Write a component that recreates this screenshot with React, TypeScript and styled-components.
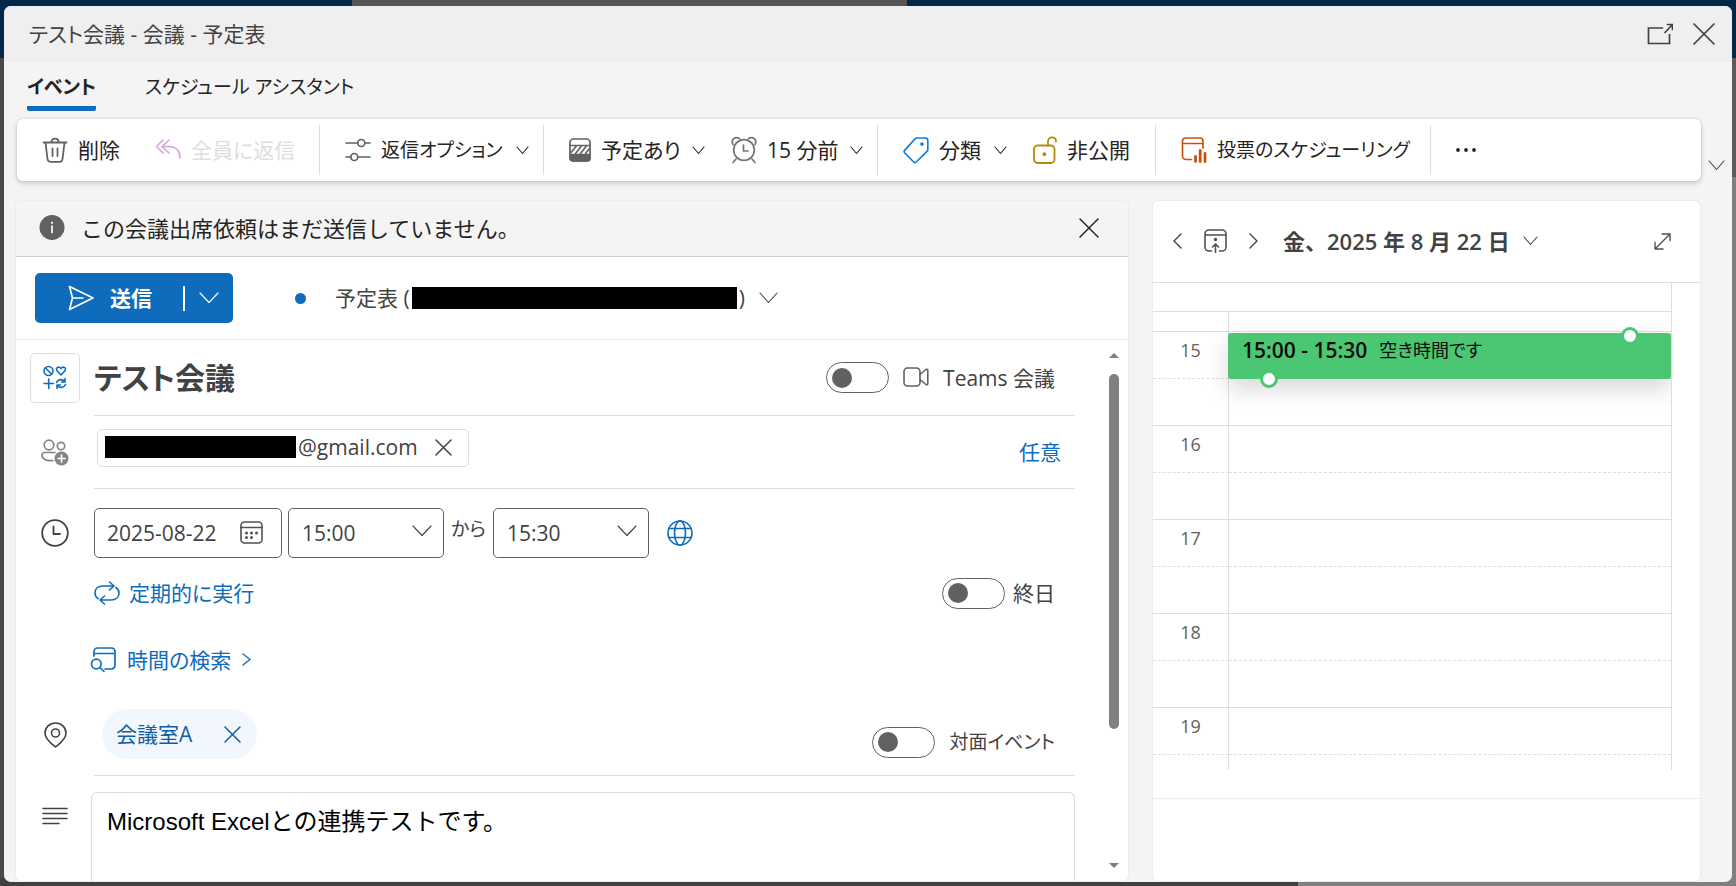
import React, { useState } from "react";
import styled, { createGlobalStyle, css } from "styled-components";

const GlobalStyle = createGlobalStyle`
  *, *::before, *::after { box-sizing: border-box; }
  body { margin: 0; }
  body, button, input, select, textarea {
    font-family: "Open Sans", "Noto Sans CJK JP", sans-serif;
    font-size: 21px;
    line-height: 28px;
    color: #424242;
    font-feature-settings: "palt";
  }
  button { border: 0; padding: 0; background: none; cursor: pointer; }
  svg { display: block; flex: none; }
  h1, p { margin: 0; font: inherit; }
`;

/* ---------- shell ---------- */

const Backdrop = styled.div`
  height: 100vh;
  min-height: 600px;
  padding: 6px 4px 4px;
  background:
    linear-gradient(#555, #555) 352px 0 / 555px 6px no-repeat,
    linear-gradient(#03264a, #03264a) 0 0 / 100% 58px no-repeat,
    linear-gradient(#404140, #404140) 0 100% / 1298px 8px no-repeat,
    linear-gradient(#4b4947, #4b4947) 0 0 / 12px 100% no-repeat,
    linear-gradient(#5a5c5c 177px, #7e8080 177px);
`;

const Dialog = styled.div`
  display: flex;
  flex-direction: column;
  height: 100%;
  overflow: hidden;
  border-radius: 7px;
  background: #f4f4f4;
`;

const TitleBar = styled.header`
  display: flex;
  align-items: center;
  flex: none;
  height: 56px;
  padding: 0 17px 0 25px;
  background: #efefef;
`;

const WindowTitle = styled.h1`
  flex: 1;
`;

const WindowButtons = styled.div`
  display: flex;
  align-items: center;
  gap: 20px;
`;

const IconButton = styled.button`
  display: flex;
  align-items: center;
  justify-content: center;
  color: inherit;
`;

/* ---------- tabs and ribbon ---------- */

const TabList = styled.div`
  display: flex;
  flex: none;
  gap: 49px;
  height: 57px;
  padding: 11px 23px 0;
`;

const Tab = styled.button<{ $active?: boolean }>`
  display: flex;
  flex-direction: column;
  align-self: flex-start;
  height: 38px;
  color: #242424;
  font-size: 19px;
  font-weight: ${(p) => (p.$active ? 700 : 400)};
  border-bottom: 5px solid ${(p) => (p.$active ? "#0f6cbd" : "transparent")};
  border-radius: 2px;
`;

const RibbonRow = styled.div`
  display: flex;
  flex: none;
  align-items: flex-end;
  padding: 0 1px 20px 13px;
`;

const Ribbon = styled.div`
  display: flex;
  align-items: center;
  flex: 1;
  height: 62px;
  border-radius: 6px;
  background: #fff;
  box-shadow: 0 2px 5px rgba(0, 0, 0, 0.2), 0 0 2px rgba(0, 0, 0, 0.14);
`;

const RibbonGroup = styled.div<{ $width: number }>`
  display: flex;
  align-items: center;
  flex: none;
  gap: 26px;
  width: ${(p) => p.$width}px;
  height: 50px;
  padding-left: 25px;
  border-right: 1px solid #dcdcdc;

  &:last-child { border-right: 0; }
`;

const RibbonButton = styled.button<{ $width: number; $split?: boolean; $compact?: boolean }>`
  display: flex;
  align-items: center;
  flex: none;
  gap: 10px;
  width: ${(p) => p.$width}px;
  color: #242424;
  font-size: ${(p) => (p.$compact ? 19 : 21)}px;
  white-space: nowrap;

  &:disabled { color: #dedede; }

  & > svg:last-child { ${(p) => p.$split && css`margin-left: auto;`} }
`;

const RibbonToggle = styled(IconButton)`
  width: 30px;
  height: 32px;
`;

/* ---------- panes ---------- */

const Panes = styled.div`
  display: grid;
  grid-template-columns: minmax(0, 1fr) 547px;
  gap: 25px;
  flex: 1;
  min-height: 0;
  padding: 0 32px 1px 12px;
`;

const Pane = styled.section`
  display: flex;
  flex-direction: column;
  min-height: 0;
  overflow: hidden;
  border-radius: 5px;
  background: #fff;
  box-shadow: 0 0 2px rgba(0, 0, 0, 0.12);
`;

const MessageBar = styled.div`
  display: flex;
  align-items: center;
  flex: none;
  gap: 16px;
  height: 56px;
  padding: 0 29px 2px 22px;
  border-bottom: 1px solid #cfcfcf;
  background: #f4f4f4;
  color: #242424;
  font-size: 22px;
  font-feature-settings: normal;

  p { flex: 1; }
`;

const SendRow = styled.div`
  display: flex;
  align-items: center;
  flex: none;
  height: 83px;
  padding: 0 19px;
  border-bottom: 1px solid #ececec;
`;

const SendSplit = styled.div`
  display: flex;
  align-items: center;
  width: 198px;
  height: 50px;
  border-radius: 5px;
  background: #0f6cbd;
  color: #fff;
`;

const SendButton = styled.button`
  display: flex;
  align-items: center;
  gap: 16px;
  width: 150px;
  height: 25px;
  padding-left: 33px;
  border-right: 2px solid #fff;
  color: #fff;
  font-weight: 700;
`;

const SendMenu = styled(IconButton)`
  flex: 1;
  height: 50px;
`;

const CalendarDot = styled.span`
  width: 11px;
  height: 11px;
  margin-left: 62px;
  border-radius: 50%;
  background: #0f6cbd;
`;

const CalendarPicker = styled.button`
  display: flex;
  align-items: center;
  gap: 2px;
  margin-left: 29px;
  color: #424242;

  & > svg { margin-left: 12px; }
`;

const Redacted = styled.span<{ $width: number }>`
  width: ${(p) => p.$width}px;
  height: 22px;
  background: #000;
`;

/* ---------- form ---------- */

const FormArea = styled.div`
  display: flex;
  flex: 1;
  min-height: 0;
`;

const Form = styled.form`
  display: flex;
  flex-direction: column;
  flex: 1;
  min-width: 0;
  padding-right: 25px;
`;

const Field = styled.div<{ $height: number }>`
  display: grid;
  grid-template-columns: 78px minmax(0, 1fr);
  flex: none;
  height: ${(p) => p.$height}px;
`;

const FieldIcon = styled.div<{ $raised?: boolean }>`
  display: flex;
  align-items: center;
  justify-content: center;
  padding-bottom: ${(p) => (p.$raised ? 16 : 0)}px;
`;

const FieldBody = styled.div<{ $line?: boolean; $end?: number }>`
  display: flex;
  align-items: center;
  justify-content: space-between;
  border-bottom: ${(p) => (p.$line ? "1px solid #dcdcdc" : "0")};
  padding-right: ${(p) => p.$end ?? 20}px;
`;

const CharmButton = styled(IconButton)`
  width: 50px;
  height: 50px;
  border: 1px solid #dedede;
  border-radius: 5px;
`;

const SubjectInput = styled.input`
  flex: 1;
  min-width: 0;
  height: 44px;
  padding: 0 0 3px;
  border: 0;
  outline: 0;
  background: none;
  font-size: 30px;
  font-weight: 700;
`;

const SwitchLabel = styled.label<{ $gap: number; $compact?: boolean }>`
  display: flex;
  align-items: center;
  gap: ${(p) => p.$gap}px;
  font-size: ${(p) => (p.$compact ? 19 : 21)}px;
  white-space: nowrap;
`;

const Switch = styled.input`
  display: flex;
  align-items: center;
  appearance: none;
  width: 63px;
  height: 31px;
  margin: 0;
  padding: 0 5px;
  border: 1px solid #616161;
  border-radius: 16px;
  background: #fff;

  &::before {
    content: "";
    width: 20px;
    height: 20px;
    border-radius: 50%;
    background: #616161;
  }
  &:checked { justify-content: flex-end; }
`;

const AttendeeChip = styled.div`
  display: flex;
  align-items: center;
  gap: 2px;
  width: 372px;
  height: 38px;
  margin: 0 0 8px 3px;
  padding: 0 16px 2px 7px;
  border: 1px solid #dedede;
  border-radius: 5px;

  & > button { margin-left: auto; }
`;

const LinkButton = styled.button<{ $gap?: number }>`
  display: flex;
  align-items: center;
  gap: ${(p) => p.$gap ?? 0}px;
  color: #0f6cbd;
`;

const FindTimeButton = styled(LinkButton)`
  margin-left: -4px;
`;

const TimeBody = styled.div`
  display: flex;
  align-items: center;
`;

const DateBox = styled.label`
  display: flex;
  align-items: center;
  width: 188px;
  height: 50px;
  margin-right: 6px;
  padding: 0 18px 0 12px;
  border: 1px solid #616161;
  border-radius: 5px;

  input {
    flex: 1;
    min-width: 0;
    padding: 0;
    border: 0;
    outline: 0;
  }
`;

const SelectBox = styled.div`
  display: grid;
  align-items: center;
  width: 156px;
  height: 50px;

  & > * { grid-area: 1 / 1; }
  & > svg { justify-self: end; margin: 0 12px 4px 0; pointer-events: none; }

  select {
    appearance: none;
    width: 100%;
    height: 50px;
    padding: 0 13px;
    border: 1px solid #616161;
    border-radius: 5px;
    background: #fff;
  }
`;

const RangeWord = styled.span`
  width: 49px;
  padding-bottom: 8px;
  font-size: 19px;
  text-align: center;
`;

const GlobeButton = styled(IconButton)`
  margin-left: 18px;
  color: #0f6cbd;
`;

const PlaceChip = styled.div`
  display: flex;
  align-items: center;
  align-self: flex-start;
  justify-content: space-between;
  width: 155px;
  height: 50px;
  margin-left: 8px;
  padding: 0 16px 0 14px;
  border-radius: 25px;
  background: #f1f7fc;
  color: #115ea3;
`;

const DescriptionField = styled.div`
  display: grid;
  grid-template-columns: 75px minmax(0, 1fr);
  flex: 1;
  min-height: 90px;
  padding-top: 16px;
`;

const DescriptionIcon = styled.div`
  padding: 15px 0 0 26px;
`;

const Description = styled.textarea`
  width: 100%;
  height: 100%;
  padding: 11px 15px;
  border: 1px solid #dcdcdc;
  border-bottom: 0;
  border-radius: 6px 6px 0 0;
  outline: 0;
  resize: none;
  overflow: hidden;
  background: none;
  color: #000;
  font-family: "Liberation Sans", "Noto Sans CJK JP", sans-serif;
  font-size: 24px;
  line-height: 36px;
  font-feature-settings: normal;
`;

const Scrollbar = styled.div`
  display: flex;
  flex-direction: column;
  align-items: center;
  justify-content: space-between;
  width: 28px;
  padding: 13px 0;
`;

const ScrollTrack = styled.div`
  flex: 1;
  width: 10px;
  padding: 16px 0;
`;

const ScrollThumb = styled.div`
  height: 75%;
  border-radius: 5px;
  background: #808080;
`;

/* ---------- day calendar ---------- */

const DayHeader = styled.div`
  display: flex;
  align-items: center;
  flex: none;
  height: 82px;
  padding: 0 29px 1px 20px;
  border-bottom: 1px solid #dedede;
`;

const DayNav = styled.div`
  display: flex;
  align-items: center;
  gap: 22px;
  width: 110px;
`;

const DayPicker = styled.button`
  display: flex;
  align-items: center;
  gap: 13px;
  margin-right: auto;
  font-size: 22px;
  font-weight: 600;
  font-feature-settings: normal;
  white-space: nowrap;
`;

const DayGrid = styled.div`
  flex: none;
  margin-right: 28px;
  border-right: 1px solid #dedede;
`;

const AllDayRow = styled.div`
  height: 29px;
  border-bottom: 1px solid #dedede;
`;

const Hours = styled.div`
  height: 458px;
  overflow: hidden;
`;

const HourRow = styled.div<{ $height: number }>`
  display: grid;
  grid-template-columns: 76px minmax(0, 1fr);
  grid-template-rows: 47px 47px;
  align-content: end;
  height: ${(p) => p.$height}px;
`;

const HourLabel = styled.div`
  display: flex;
  align-items: center;
  justify-content: center;
  padding-bottom: 10px;
  border-right: 1px solid #dedede;
  border-bottom: 1px dashed #e0e0e0;
  color: #616161;
  font-size: 18px;
`;

const HourGutter = styled.div`
  border-right: 1px solid #dedede;
  border-bottom: 1px solid #dedede;
`;

const HalfSlot = styled.div<{ $dashed?: boolean }>`
  position: relative;
  border-bottom: 1px ${(p) => (p.$dashed ? "dashed" : "solid")} #dedede;
`;

const EventBlock = styled.div`
  position: absolute;
  inset: 1px 0 -1px -1px;
  z-index: 1;
  display: flex;
  align-items: flex-start;
  gap: 12px;
  padding: 3px 14px;
  border-radius: 3px;
  background: #4bc672;
  color: #0b0b0b;
  font-size: 18px;
  white-space: nowrap;
  box-shadow: 0 10px 24px rgba(0, 0, 0, 0.16);

  strong { font-size: 21px; font-weight: 600; }
`;

const Handle = styled.span<{ $end?: boolean }>`
  position: absolute;
  ${(p) => (p.$end ? "bottom: -9px; left: 32px;" : "top: -6px; right: 32px;")}
  width: 18px;
  height: 18px;
  border: 3px solid #4bc672;
  border-radius: 50%;
  background: #fff;
`;

const DayFooter = styled.div`
  flex: 1;
  margin-top: 28px;
  border-top: 1px solid #ececec;
`;

/* ---------- icons ---------- */

interface IconProps {
  w?: number;
  h?: number;
  box?: string;
  color?: string;
  stroke?: number;
  children: React.ReactNode;
}

const Icon = ({ w = 26, h = w, box, color = "currentColor", stroke = 1.6, children }: IconProps) => (
  <svg
    width={w}
    height={h}
    viewBox={box ?? `0 0 ${w} ${h}`}
    fill="none"
    stroke={color}
    strokeWidth={stroke}
    strokeLinecap="round"
    strokeLinejoin="round"
    aria-hidden="true"
  >
    {children}
  </svg>
);

const Chevron = ({ w = 13, color }: { w?: number; color?: string }) => {
  const h = Math.round(w / 2) + 2;
  return (
    <Icon w={w} h={h} color={color} stroke={1.1}>
      <path d={`M1 1 L${w / 2} ${h - 1.5} L${w - 1} 1`} />
    </Icon>
  );
};

const Cross = ({ size, color, stroke = 1.5 }: { size: number; color?: string; stroke?: number }) => (
  <Icon w={size} color={color} stroke={stroke}>
    <path d={`M1 1 L${size - 1} ${size - 1} M${size - 1} 1 L1 ${size - 1}`} />
  </Icon>
);

const PopOutIcon = () => (
  <Icon w={26} h={22} stroke={1.7}>
    <path d="M15.500 5H1.500v15.500h21V11.500M18 9.500 25 2M20.500 1.500h5v5" strokeLinejoin="miter" />
  </Icon>
);

const TrashIcon = () => (
  <Icon color="#616161" stroke={1.8}>
    <path d="M1.500 5.500h23M9.500 5c0-4.600 7-4.600 7 0M3.500 5.500l2 16.500c.2 1.800 1.200 2.800 3 2.800h9c1.800 0 2.800-1 3-2.800l2-16.500M10.500 11.500v7.500M15.500 11.500v7.500" />
  </Icon>
);

const ReplyAllIcon = () => (
  <Icon w={26} h={24} color="#d9a5de" stroke={1.7}>
    <path d="M8 2 1.500 8.500 8 15M14 2 7 8.500l7 6.500M7.500 8.500H14c6.500 0 11 4 11 11.500" />
  </Icon>
);

const SlidersIcon = () => (
  <Icon w={26} h={24} color="#616161" stroke={1.7}>
    <path d="M1 5h11.500M20 5h5M1 19h5M13 19h12" />
    <circle cx="16.300" cy="5" r="3.500" />
    <circle cx="9.300" cy="19" r="3.500" />
  </Icon>
);

const BusyIcon = () => (
  <Icon w={22} h={24} color="#616161" stroke={1.7}>
    <rect x="1" y="1" width="20" height="22" rx="3.500" />
    <path d="M1 16.500h20v3.500a3 3 0 0 1-3 3H4a3 3 0 0 1-3-3z" fill="#616161" />
    <path d="M1 7.500h20M2 14.500 7 8.500M6.500 15.500 12 8.500M11.500 15.500 17 8.500M16.500 15.500 20.500 10.500" />
  </Icon>
);

const AlarmIcon = () => (
  <Icon w={26} h={28} color="#757575" stroke={1.7}>
    <circle cx="13" cy="14" r="10.300" />
    <path d="M2 8.500C-.5 4 3.500 0 8.500 2.500M24 8.500C26.500 4 22.500 0 17.500 2.500M12.500 9v6h4.500M5 23 2 26.500M21 23l3 3.500" />
  </Icon>
);

const TagIcon = () => (
  <Icon w={26} h={28} color="#0f7fd8" stroke={1.7}>
    <path d="M14 2h8.500c1.500 0 2.300.9 2.300 2.500v9c0 .8-.3 1.300-.8 1.900L13.200 26c-.8.900-1.700.9-2.500 0L1.800 17c-.9-.9-.9-2 0-2.900L12.300 2.700c.5-.5 1-.7 1.700-.7z" />
    <circle cx="19" cy="8" r="1" fill="#0f7fd8" />
  </Icon>
);

const UnlockIcon = () => (
  <Icon w={24} h={28} color="#b38a10" stroke={1.8}>
    <rect x="1" y="9.500" width="20.500" height="17.500" rx="3.500" />
    <path d="M15 9.500V5.500c0-5.500 8-5.500 8 0" />
    <circle cx="11.300" cy="18.200" r="1" fill="#b38a10" />
  </Icon>
);

const PollIcon = () => (
  <Icon w={26} h={26} color="#ca5010" stroke={1.7}>
    <path d="M10.500 22.500H5A3.500 3.500 0 0 1 1.500 19V4A3 3 0 0 1 4.500 1h14.500a3 3 0 0 1 3 3v7M1.500 6.500h20.500" />
    <path d="M14.500 19.500v5M19.200 13.500v11M24 16.500v8" strokeWidth="2.800" />
  </Icon>
);

const MoreIcon = () => (
  <Icon w={20} h={4} color="none">
    <g fill="#242424">
      <circle cx="2" cy="2" r="1.900" />
      <circle cx="10" cy="2" r="1.900" />
      <circle cx="18" cy="2" r="1.900" />
    </g>
  </Icon>
);

const InfoIcon = () => (
  <Icon w={27} color="none">
    <circle cx="14" cy="13.500" r="12.500" fill="#616161" />
    <path d="M14 12v6.500" stroke="#fff" strokeWidth="1.700" />
    <circle cx="14" cy="8.800" r="1.100" fill="#fff" />
  </Icon>
);

const SendIcon = () => (
  <Icon w={26} h={26} stroke={1.7}>
    <path d="M1.500 1.500 25 13 1.500 24.500 4.500 13zM4.500 13H15" />
  </Icon>
);

const CharmIcon = () => (
  <Icon w={24} h={26} color="#0f6cbd" stroke={1.6}>
    <circle cx="5.500" cy="6" r="4.500" />
    <path d="M2.500 3 8.500 9M18 10l-3.800-4C12 3.200 15.500.5 18 3.500c2.500-3 6-.3 3.800 2.500zM1 18.500h9.500M5.700 14v9.500M13.500 17.500c1.500-3.500 6-3.800 8-1M22 13.500v3.500h-3.500M22.500 19.500c-1.500 3.500-6 3.800-8 1M14 23.500V20h3.500" />
  </Icon>
);

const VideoIcon = () => (
  <Icon w={26} h={22} color="#616161" stroke={1.6}>
    <rect x="1" y="1" width="16" height="18" rx="3.500" />
    <path d="m17 7.500 6-5c.8-.6 1.800-.3 1.800.7v13.600c0 1-1 1.300-1.800.7l-6-5" />
  </Icon>
);

const PeopleAddIcon = () => (
  <Icon w={28} h={27} color="#858585" stroke={1.7}>
    <circle cx="8" cy="6" r="4.800" />
    <circle cx="20" cy="7" r="3.700" />
    <path d="M14 13.500H3.500A2.500 2.500 0 0 0 1 16c0 4 4 6.300 11 5.500" />
    <circle cx="20.500" cy="19.500" r="7" fill="#858585" stroke="none" />
    <path d="M20.500 16v7M17 19.500h7" stroke="#fff" />
  </Icon>
);

const ClockIcon = () => (
  <Icon w={28} stroke={1.8}>
    <circle cx="14" cy="14" r="12.800" />
    <path d="M12.500 7.500v7.500h6.500" />
  </Icon>
);

const CalendarIcon = () => (
  <Icon w={23} h={23} color="#505050" stroke={1.6}>
    <rect x="1" y="1" width="21" height="21" rx="3.500" />
    <path d="M1 6.500h21" />
    <g fill="#505050" stroke="none">
      <circle cx="6.500" cy="12" r="1.500" />
      <circle cx="11.500" cy="12" r="1.500" />
      <circle cx="16.500" cy="12" r="1.500" />
      <circle cx="6.500" cy="16.500" r="1.500" />
      <circle cx="11.500" cy="16.500" r="1.500" />
    </g>
  </Icon>
);

const GlobeIcon = () => (
  <Icon w={26} stroke={1.6}>
    <circle cx="13" cy="13" r="12" />
    <ellipse cx="13" cy="13" rx="5.500" ry="12" />
    <path d="M2 8.500h22M2 17.500h22" />
  </Icon>
);

const RepeatIcon = () => (
  <Icon w={26} h={24} stroke={1.6}>
    <path d="M15.500 1l4.500 4-4.500 4M20 5H9C3.500 5 1 8.500 1 12c0 2.500 1 4.300 3 5.700M22 6.500c2 1.300 3 3.200 3 5.500 0 3.500-2.500 7-8 7H6M10.500 15 6 19l4.500 4" />
  </Icon>
);

const FindTimeIcon = () => (
  <Icon w={26} h={26} stroke={1.7}>
    <path d="M4 9V4.500A3.500 3.500 0 0 1 7.500 1h14A3.500 3.500 0 0 1 25 4.500v14a3.500 3.500 0 0 1-3.500 3.500H15M4 6.500h21" />
    <circle cx="6.300" cy="17" r="4.800" />
    <path d="m10 20.500 4 4" />
  </Icon>
);

const SmallArrow = ({ flip, color, h = 16 }: { flip?: boolean; color?: string; h?: number }) => (
  <Icon w={9} h={h} color={color} stroke={1.4}>
    <path d={flip ? `M8 1 1 ${h / 2} 8 ${h - 1}` : `M1 1 8 ${h / 2} 1 ${h - 1}`} />
  </Icon>
);

const PinIcon = () => (
  <Icon w={23} h={26} stroke={1.6}>
    <path d="M11.500 25C8 22 1 17.500 1 11a10.500 10 0 0 1 21 0c0 6.500-7 11-10.500 14z" />
    <circle cx="11.500" cy="11" r="4" />
  </Icon>
);

const TextIcon = () => (
  <Icon w={26} h={18} stroke={1.5}>
    <path d="M1 1.500h24M1 6.500h24M1 11.500h24M1 16.500h16" />
  </Icon>
);

const TodayIcon = () => (
  <Icon w={23} h={24} color="#505050" stroke={1.6}>
    <path d="M7.500 22H5a4 4 0 0 1-4-4V5a4 4 0 0 1 4-4h13a4 4 0 0 1 4 4v13a4 4 0 0 1-4 4h-2.500M1 6h21M11.500 23.500v-8M8.500 18l3-3 3 3" />
    <circle cx="11.500" cy="10.500" r=".9" fill="#505050" />
  </Icon>
);

const ExpandIcon = () => (
  <Icon w={17} h={17} color="#505050" stroke={1.4}>
    <path d="M1 9.500V16h8M1 16 16 1M8 1h8v6.500" />
  </Icon>
);

const ScrollArrow = ({ down }: { down?: boolean }) => (
  <Icon w={10} h={5} color="none">
    <path d={down ? "M0 0h10L5 5z" : "M0 5h10L5 0z"} fill="#7f7f7f" />
  </Icon>
);

/* ---------- screen ---------- */

const hours = [16, 17, 18, 19];
const times = ["15:00", "15:30", "16:00", "16:30"];

const TimeSelect = ({ label, initial }: { label: string; initial: string }) => (
  <SelectBox>
    <select aria-label={label} defaultValue={initial}>
      {times.map((t) => (
        <option key={t}>{t}</option>
      ))}
    </select>
    <Chevron w={20} />
  </SelectBox>
);

export default function App() {
  const [subject, setSubject] = useState("テスト会議");

  return (
    <>
      <GlobalStyle />
      <Backdrop>
        <Dialog role="dialog" aria-label="会議の編集">
          <TitleBar>
            <WindowTitle>テスト会議 - 会議 - 予定表</WindowTitle>
            <WindowButtons>
              <IconButton aria-label="新しいウィンドウで開く"><PopOutIcon /></IconButton>
              <IconButton aria-label="閉じる"><Cross size={22} stroke={1.7} /></IconButton>
            </WindowButtons>
          </TitleBar>

          <TabList role="tablist">
            <Tab role="tab" aria-selected="true" $active>イベント</Tab>
            <Tab role="tab" aria-selected="false">スケジュール アシスタント</Tab>
          </TabList>

          <RibbonRow>
            <Ribbon role="toolbar" aria-label="イベントの操作">
              <RibbonGroup $width={303}>
                <RibbonButton $width={87}><TrashIcon />削除</RibbonButton>
                <RibbonButton $width={144} disabled><ReplyAllIcon />全員に返信</RibbonButton>
              </RibbonGroup>
              <RibbonGroup $width={224}>
                <RibbonButton $width={184} $split $compact><SlidersIcon />返信オプション<Chevron /></RibbonButton>
              </RibbonGroup>
              <RibbonGroup $width={334}>
                <RibbonButton $width={136} $split><BusyIcon />予定あり<Chevron /></RibbonButton>
                <RibbonButton $width={132} $split><AlarmIcon />15 分前<Chevron /></RibbonButton>
              </RibbonGroup>
              <RibbonGroup $width={278}>
                <RibbonButton $width={104} $split><TagIcon />分類<Chevron /></RibbonButton>
                <RibbonButton $width={110}><UnlockIcon />非公開</RibbonButton>
              </RibbonGroup>
              <RibbonGroup $width={275}>
                <RibbonButton $width={230} $compact><PollIcon />投票のスケジューリング</RibbonButton>
              </RibbonGroup>
              <RibbonGroup $width={80}>
                <RibbonButton $width={24} aria-label="その他"><MoreIcon /></RibbonButton>
              </RibbonGroup>
            </Ribbon>
            <RibbonToggle aria-label="リボンの表示"><Chevron w={17} /></RibbonToggle>
          </RibbonRow>

          <Panes>
            <Pane>
              <MessageBar role="status">
                <InfoIcon />
                <p>この会議出席依頼はまだ送信していません。</p>
                <IconButton aria-label="通知を閉じる"><Cross size={20} /></IconButton>
              </MessageBar>

              <SendRow>
                <SendSplit>
                  <SendButton><SendIcon />送信</SendButton>
                  <SendMenu aria-label="送信オプション"><Chevron w={20} /></SendMenu>
                </SendSplit>
                <CalendarDot />
                <CalendarPicker>
                  予定表 (<Redacted $width={325} />)
                  <Chevron w={19} />
                </CalendarPicker>
              </SendRow>

              <FormArea>
                <Form onSubmit={(e) => e.preventDefault()}>
                  <Field $height={76}>
                    <FieldIcon>
                      <CharmButton type="button" aria-label="アイコン"><CharmIcon /></CharmButton>
                    </FieldIcon>
                    <FieldBody $line>
                      <SubjectInput
                        aria-label="タイトル"
                        value={subject}
                        onChange={(e) => setSubject(e.target.value)}
                      />
                      <SwitchLabel $gap={14}>
                        <Switch type="checkbox" role="switch" />
                        <VideoIcon />
                        Teams 会議
                      </SwitchLabel>
                    </FieldBody>
                  </Field>

                  <Field $height={73}>
                    <FieldIcon><PeopleAddIcon /></FieldIcon>
                    <FieldBody $line $end={14}>
                      <AttendeeChip>
                        <Redacted $width={191} />
                        @gmail.com
                        <IconButton type="button" aria-label="出席者を削除"><Cross size={17} /></IconButton>
                      </AttendeeChip>
                      <LinkButton type="button">任意</LinkButton>
                    </FieldBody>
                  </Field>

                  <Field $height={87}>
                    <FieldIcon><ClockIcon /></FieldIcon>
                    <TimeBody>
                      <DateBox>
                        <input aria-label="開始日" defaultValue="2025-08-22" />
                        <CalendarIcon />
                      </DateBox>
                      <TimeSelect label="開始時刻" initial="15:00" />
                      <RangeWord>から</RangeWord>
                      <TimeSelect label="終了時刻" initial="15:30" />
                      <GlobeButton type="button" aria-label="タイム ゾーン"><GlobeIcon /></GlobeButton>
                    </TimeBody>
                  </Field>

                  <Field $height={34}>
                    <span />
                    <FieldBody>
                      <LinkButton type="button" $gap={9}><RepeatIcon />定期的に実行</LinkButton>
                      <SwitchLabel $gap={8}>
                        <Switch type="checkbox" role="switch" />
                        終日
                      </SwitchLabel>
                    </FieldBody>
                  </Field>

                  <Field $height={99}>
                    <span />
                    <FieldBody>
                      <FindTimeButton type="button" $gap={11}>
                        <FindTimeIcon />時間の検索<SmallArrow h={13} />
                      </FindTimeButton>
                    </FieldBody>
                  </Field>

                  <Field $height={67}>
                    <FieldIcon $raised><PinIcon /></FieldIcon>
                    <FieldBody $line>
                      <PlaceChip>
                        会議室A
                        <IconButton type="button" aria-label="場所を削除"><Cross size={17} /></IconButton>
                      </PlaceChip>
                      <SwitchLabel $gap={14} $compact>
                        <Switch type="checkbox" role="switch" />
                        対面イベント
                      </SwitchLabel>
                    </FieldBody>
                  </Field>

                  <DescriptionField>
                    <DescriptionIcon><TextIcon /></DescriptionIcon>
                    <Description aria-label="説明" defaultValue="Microsoft Excelとの連携テストです。" />
                  </DescriptionField>
                </Form>

                <Scrollbar aria-hidden="true">
                  <ScrollArrow />
                  <ScrollTrack><ScrollThumb /></ScrollTrack>
                  <ScrollArrow down />
                </Scrollbar>
              </FormArea>
            </Pane>

            <Pane>
              <DayHeader>
                <DayNav>
                  <IconButton aria-label="前の日"><SmallArrow flip /></IconButton>
                  <IconButton aria-label="今日"><TodayIcon /></IconButton>
                  <IconButton aria-label="次の日"><SmallArrow /></IconButton>
                </DayNav>
                <DayPicker>金、2025 年 8 月 22 日<Chevron w={15} /></DayPicker>
                <IconButton aria-label="展開"><ExpandIcon /></IconButton>
              </DayHeader>
              <DayGrid>
                <AllDayRow />
                <Hours>
                  <HourRow $height={20}>
                    <HourLabel />
                    <HalfSlot />
                    <HourGutter />
                    <HalfSlot />
                  </HourRow>
                  <HourRow $height={94}>
                    <HourLabel>15</HourLabel>
                    <HalfSlot $dashed>
                      <EventBlock>
                        <strong>15:00 - 15:30</strong>
                        <span>空き時間です</span>
                        <Handle />
                        <Handle $end />
                      </EventBlock>
                    </HalfSlot>
                    <HourGutter />
                    <HalfSlot />
                  </HourRow>
                  {hours.map((h) => (
                    <HourRow key={h} $height={94}>
                      <HourLabel>{h}</HourLabel>
                      <HalfSlot $dashed />
                      <HourGutter />
                      <HalfSlot />
                    </HourRow>
                  ))}
                </Hours>
              </DayGrid>
              <DayFooter />
            </Pane>
          </Panes>
        </Dialog>
      </Backdrop>
    </>
  );
}
